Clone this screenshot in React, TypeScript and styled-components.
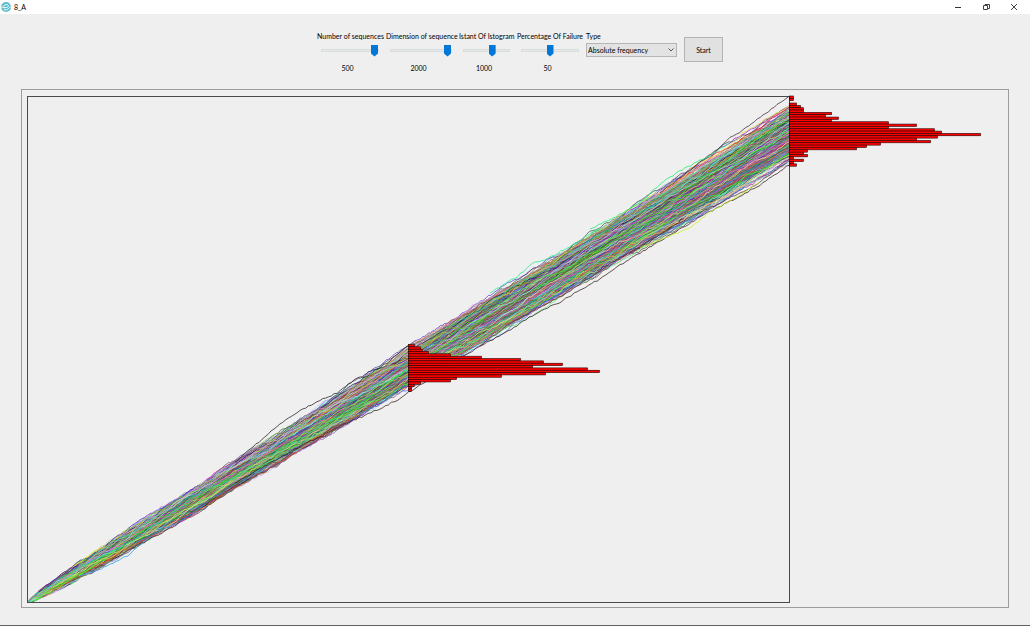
import React, { useState } from "react";
import styled, { createGlobalStyle } from "styled-components";

const GlobalStyle = createGlobalStyle`
  * { box-sizing: border-box; }
  body {
    margin: 0;
    background: #efefef;
    color: #000;
    font-family: Lato, "Liberation Sans", sans-serif;
    font-size: 7px;
    line-height: 8px;
  }
`;

const Window = styled.div`
  display: flex;
  flex-direction: column;
  min-height: 100vh;
  border-bottom: 1px solid #5f5f5f;
`;

const TitleBar = styled.header`
  display: flex;
  align-items: center;
  height: 14px;
  padding: 0 10px 0 1px;
  background: #fff;
`;

const Title = styled.h1`
  flex: 1;
  margin: 0 0 0 3px;
  font-size: 7px;
  font-weight: 400;
`;

const CaptionButtons = styled.div`
  display: flex;
  gap: 16px;
`;

const CaptionButton = styled.button`
  display: flex;
  align-items: center;
  justify-content: center;
  width: 12px;
  height: 12px;
  padding: 0;
  border: 0;
  background: transparent;
`;

const Controls = styled.form`
  display: flex;
  justify-content: center;
  gap: 5px;
  height: 75px;
  padding: 18px 0 0 10px;
`;

const Field = styled.div<{ $width: number }>`
  display: flex;
  flex-direction: column;
  width: ${(p) => p.$width}px;
`;

const Label = styled.label`
  height: 8px;
  white-space: nowrap;
`;

const Slider = styled.input`
  appearance: none;
  height: 12px;
  margin: 4px 2px 0 4px;
  background: transparent;

  &::-webkit-slider-runnable-track {
    height: 3px;
    border: 1px solid #d9dcdc;
    background: #e7eaea;
  }

  &::-webkit-slider-thumb {
    appearance: none;
    width: 7px;
    height: 12px;
    margin-top: -5px;
    background: #0078d7;
    clip-path: polygon(0 0, 100% 0, 100% 75%, 50% 100%, 0 75%);
  }
`;

const Value = styled.output`
  margin-top: 8px;
  padding-right: 3px;
  text-align: center;
`;

const SelectBox = styled.div`
  position: relative;
  margin-top: 3px;
`;

const Select = styled.select`
  appearance: none;
  display: block;
  width: 100%;
  height: 14px;
  padding: 0 12px 0 1px;
  border: 1px solid #b5b5b5;
  border-radius: 0;
  background: #e3e3e3;
  color: inherit;
  font: inherit;
`;

const Chevron = styled.svg`
  position: absolute;
  top: 5px;
  right: 3px;
  pointer-events: none;
`;

const StartButton = styled.button`
  width: 39px;
  height: 25px;
  margin: 5px 0 0 2px;
  padding: 0;
  border: 1px solid #b4b4b4;
  background: #e1e1e1;
  color: inherit;
  font: inherit;
`;

const ChartPanel = styled.main`
  flex: 1;
  display: flex;
  margin: 0 21px 17px;
  border: 1px solid #9c9c9c;
`;

const Chart = styled.svg`
  display: block;
  width: 100%;
`;

type Point = [number, number];

const ORIGIN: Point = [28, 602];
const END_X = 789;
const MIDDLE_X = 408;
const TOP = 96;
const MEAN_RISE = 469;
const SPREAD = 13;
const BIN = 2.34;

// Bar lengths, top bin first
const finalBins = [4, 4, 0, 7, 11, 14, 14, 42, 36, 49, 42, 99, 127, 99, 145, 152, 191, 148, 127, 141, 91, 77, 67, 18, 14, 18, 4, 14, 4, 7];
const middleBins = [6, 12, 14, 20, 42, 73, 112, 135, 154, 124, 179, 191, 137, 93, 48, 42, 12, 6, 3, 3];

function createRandom(seed: number) {
  let s = seed;
  return () => {
    s = (s + 0x6d2b79f5) | 0;
    let t = Math.imul(s ^ (s >>> 15), 1 | s);
    t = (t + Math.imul(t ^ (t >>> 7), 61 | t)) ^ t;
    return ((t ^ (t >>> 14)) >>> 0) / 4294967296;
  };
}

function buildWalks(count: number) {
  const random = createRandom(8);
  const gauss = () =>
    Math.sqrt(-2 * Math.log(1 - random())) * Math.cos(2 * Math.PI * random());
  const steps = 380;
  const walks: { d: string; color: string }[] = [];
  while (walks.length < count) {
    let offset = 0;
    let inside = true;
    let d = `M${ORIGIN[0]} ${ORIGIN[1]}`;
    for (let i = 1; i <= steps; i++) {
      const t = i / steps;
      offset += (gauss() * SPREAD) / Math.sqrt(steps);
      if (Math.abs(offset) > 3 + 28 * Math.sqrt(t)) inside = false;
      const x = ORIGIN[0] + t * (END_X - ORIGIN[0]);
      const y = Math.min(ORIGIN[1], ORIGIN[1] - t * MEAN_RISE + offset);
      d += `L${x.toFixed(1)} ${y.toFixed(1)}`;
    }
    const channel = (low: number) => Math.floor(low + random() * (256 - low));
    const color = `rgb(${channel(20)},${channel(25)},${channel(20)})`;
    if (inside) walks.push({ d, color });
  }
  return walks;
}

// Joins the given points by a slightly jagged line
function jagged(points: Point[], seed: number) {
  const random = createRandom(seed);
  let d = `M${points[0][0]} ${points[0][1]}`;
  for (let i = 1; i < points.length; i++) {
    const [x0, y0] = points[i - 1];
    const [x1, y1] = points[i];
    const parts = Math.max(1, Math.round((x1 - x0) / 3));
    for (let k = 1; k <= parts; k++) {
      const t = k / parts;
      const y = y0 + (y1 - y0) * t + (random() - 0.5) * 1.6;
      d += `L${(x0 + (x1 - x0) * t).toFixed(1)} ${y.toFixed(1)}`;
    }
  }
  return d;
}

const outliers: { points: Point[]; color: string }[] = [
  { color: "#4a3038", points: [[660, 193], [703, 160], [717, 150], [730, 138], [743, 130], [763, 115], [777, 105], [789, 97]] },
  { color: "#3c2626", points: [[235, 483], [270, 463], [307, 443], [347, 423], [377, 410], [397, 400], [423, 383], [463, 356], [508, 331], [535, 314], [560, 302], [580, 290], [600, 279], [620, 265], [640, 253], [673, 233], [707, 213], [733, 200], [760, 185], [789, 165]] },
  { color: "#5a3434", points: [[480, 346], [508, 325], [540, 307], [570, 291], [610, 264], [650, 240], [690, 217], [720, 203], [755, 185], [789, 161]] },
  { color: "#2b2b2b", points: [[235, 462], [253, 447], [277, 426], [297, 412], [317, 402], [337, 393], [357, 378], [367, 376], [387, 363], [408, 345]] },
  { color: "#20f070", points: [[590, 229], [613, 218], [640, 203], [657, 187], [670, 177], [685, 168], [703, 159], [730, 143]] },
  { color: "#20f090", points: [[490, 293], [515, 278], [535, 262], [545, 260], [570, 246], [600, 228]] },
  { color: "#c8f020", points: [[640, 248], [660, 240], [675, 234], [690, 228], [707, 214], [733, 199], [760, 182]] },
  { color: "#2a9df0", points: [[80, 576], [98, 570], [116, 562], [130, 554], [152, 535], [175, 524], [205, 505]] },
];

const walks = buildWalks(500);

function Histogram({ x, y, bins }: { x: number; y: number; bins: number[] }) {
  return (
    <g fill="#ff0000" stroke="#200000" strokeWidth={0.6}>
      {bins.map((length, i) =>
        length > 0 ? (
          <rect key={i} x={x + 0.5} y={y + i * BIN} width={length} height={BIN} />
        ) : null
      )}
    </g>
  );
}

function AppLogo() {
  return (
    <svg width="10" height="10" viewBox="0 0 20 20" aria-hidden="true">
      <circle cx="10" cy="10" r="10" fill="#5cbccb" />
      <path d="M0 11C5 10 6 5 11 5s5 5 0 6-5-1-8 1M6 15c3 2 7 0 9-2s3-3 5-3" fill="none" stroke="#fff" strokeWidth="2" />
    </svg>
  );
}

interface RangeFieldProps {
  id: string;
  label: string;
  width: number;
  min: number;
  max: number;
  initial: number;
}

function RangeField({ id, label, width, min, max, initial }: RangeFieldProps) {
  const [value, setValue] = useState(initial);
  return (
    <Field $width={width}>
      <Label htmlFor={id}>{label}</Label>
      <Slider
        id={id}
        type="range"
        min={min}
        max={max}
        value={value}
        onChange={(e) => setValue(Number(e.target.value))}
      />
      <Value htmlFor={id}>{value}</Value>
    </Field>
  );
}

export default function App() {
  return (
    <Window>
      <GlobalStyle />
      <TitleBar>
        <AppLogo />
        <Title>8_A</Title>
        <CaptionButtons>
          <CaptionButton type="button" aria-label="Minimize">
            <svg width="8" height="8" viewBox="0 0 8 8" stroke="#333" fill="none"><path d="M1 4.5h6" /></svg>
          </CaptionButton>
          <CaptionButton type="button" aria-label="Restore">
            <svg width="8" height="8" viewBox="0 0 8 8" stroke="#444" fill="none"><path d="M1.5 2.5h4v4h-4zM3 2V1.5h4.5v4H6" /></svg>
          </CaptionButton>
          <CaptionButton type="button" aria-label="Close">
            <svg width="8" height="8" viewBox="0 0 8 8" stroke="#444" fill="none"><path d="M1 1l6 6M7 1L1 7" /></svg>
          </CaptionButton>
        </CaptionButtons>
      </TitleBar>
      <Controls onSubmit={(e) => e.preventDefault()}>
        <RangeField id="sequences" label="Number of sequences" width={64} min={1} max={500} initial={500} />
        <RangeField id="dimension" label="Dimension of sequence" width={68} min={1} max={2000} initial={2000} />
        <RangeField id="instant" label="Istant Of Istogram" width={53} min={1} max={1540} initial={1000} />
        <RangeField id="failure" label="Percentage Of Failure" width={64} min={0} max={100} initial={50} />
        <Field $width={91}>
          <Label htmlFor="type">Type</Label>
          <SelectBox>
            <Select id="type">
              <option>Absolute frequency</option>
              <option>Relative frequency</option>
            </Select>
            <Chevron width="6" height="4" viewBox="0 0 6 4" fill="none" stroke="#555">
              <path d="M0.5 0.5L3 3L5.5 0.5" />
            </Chevron>
          </SelectBox>
        </Field>
        <StartButton type="submit">Start</StartButton>
      </Controls>
      <ChartPanel>
        <Chart viewBox="22 90 986 517" role="img" aria-label="Sequence paths with frequency histograms">
          <g fill="none" strokeWidth={0.8}>
            {walks.map((walk, i) => (
              <path key={i} d={walk.d} stroke={walk.color} />
            ))}
            {outliers.map((line, i) => (
              <path key={i} d={jagged(line.points, i + 1)} stroke={line.color} />
            ))}
          </g>
          <rect x="27.5" y="96.5" width="762" height="506" fill="none" stroke="#4a4a4a" />
          <Histogram x={MIDDLE_X} y={344.5} bins={middleBins} />
          <Histogram x={END_X} y={TOP} bins={finalBins} />
        </Chart>
      </ChartPanel>
    </Window>
  );
}
